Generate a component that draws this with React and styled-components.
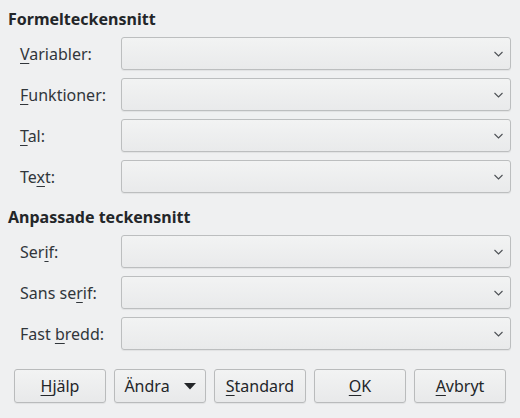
import React from "react";
import styled, { createGlobalStyle } from "styled-components";

const GlobalStyle = createGlobalStyle`
  html, body {
    margin: 0;
    padding: 0;
    background: #eff0f1;
  }
  body {
    font-family: "Noto Sans", "Open Sans", sans-serif;
    font-size: 16px;
    color: #232629;
  }
`;

const Page = styled.div`
  width: 520px;
  height: 418px;
  box-sizing: border-box;
  padding: 9px 9px 0 8px;
  display: flex;
  flex-direction: column;
`;

const Heading = styled.div`
  font-weight: 700;
  line-height: 20px;
  height: 20px;
  margin-top: ${({ $top }) => $top || 0}px;
`;

const FormGrid = styled.div`
  display: grid;
  grid-template-columns: 101px 1fr;
  grid-auto-rows: 33px;
  row-gap: 8px;
  padding-left: 12px;
  margin-top: 8px;
`;

const Label = styled.label`
  display: flex;
  align-items: center;
  color: #31363b;
  white-space: nowrap;

  u {
    text-decoration-thickness: 1px;
    text-underline-offset: 3px;
  }
`;

const Combo = styled.div`
  box-sizing: border-box;
  height: 33px;
  border: 1px solid #bcbebf;
  border-radius: 3px;
  background: linear-gradient(#f2f3f3, #e9eaeb);
  box-shadow: 0 1px 1px rgba(0, 0, 0, 0.06);
  display: flex;
  align-items: center;
  justify-content: flex-end;
  padding-right: 7px;
`;

const ButtonRow = styled.div`
  display: flex;
  gap: 8px;
  padding-left: 6px;
  margin-top: 19px;
`;

const Button = styled.button`
  box-sizing: border-box;
  width: 92px;
  height: 34px;
  border: 1px solid #b9bbbc;
  border-radius: 3px;
  background: linear-gradient(#f2f3f3, #e8e9ea);
  box-shadow: 0 1px 1px rgba(0, 0, 0, 0.06);
  font-family: inherit;
  font-size: 16px;
  color: #232629;
  display: flex;
  align-items: center;
  justify-content: center;
  gap: 14px;
  padding: 0;

  u {
    text-decoration-thickness: 1px;
    text-underline-offset: 3px;
  }
`;

const Chevron = () => (
  <svg width="9" height="6" viewBox="0 0 9 6">
    <polyline points="0.5,1 4.5,5 8.5,1" fill="none" stroke="#4d5155" strokeWidth="1.1" />
  </svg>
);

const Triangle = () => (
  <svg width="12" height="7" viewBox="0 0 12 7">
    <polygon points="0,0 12,0 6,6.5" fill="#232629" />
  </svg>
);

const Row = ({ children }) => (
  <>
    <Label>
      <span>{children}</span>
    </Label>
    <Combo>
      <Chevron />
    </Combo>
  </>
);

export default function App() {
  return (
    <>
      <GlobalStyle />
      <Page>
        <Heading>Formelteckensnitt</Heading>
        <FormGrid>
          <Row><u>V</u>ariabler:</Row>
          <Row><u>F</u>unktioner:</Row>
          <Row><u>T</u>al:</Row>
          <Row>Te<u>x</u>t:</Row>
        </FormGrid>
        <Heading $top={14}>Anpassade teckensnitt</Heading>
        <FormGrid>
          <Row>Ser<u>i</u>f:</Row>
          <Row>Sans se<u>r</u>if:</Row>
          <Row>Fast <u>b</u>redd:</Row>
        </FormGrid>
        <ButtonRow>
          <Button><span><u>H</u>jälp</span></Button>
          <Button><span>Ändra</span><Triangle /></Button>
          <Button><span><u>S</u>tandard</span></Button>
          <Button><span><u>O</u>K</span></Button>
          <Button><span><u>A</u>vbryt</span></Button>
        </ButtonRow>
      </Page>
    </>
  );
}
